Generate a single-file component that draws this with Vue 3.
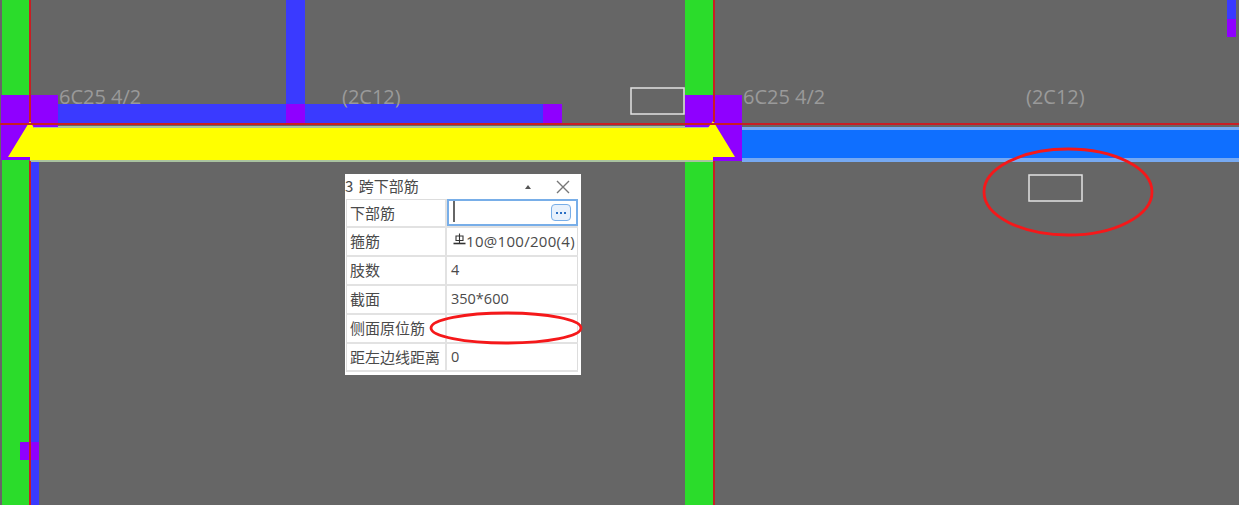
<template>
  <div class="page">
    <svg class="canvas" width="1239" height="505" viewBox="0 0 1239 505">
      <!-- columns -->
      <rect x="2" y="0" width="27" height="505" fill="#2bdc2b" />
      <rect x="685" y="0" width="28" height="505" fill="#2bdc2b" />
      <rect x="30" y="160" width="9" height="345" fill="#3a3aff" />
      <rect x="286" y="0" width="19" height="104" fill="#3a3aff" />
      <rect x="1227" y="0" width="9" height="19" fill="#3a3aff" />
      <rect x="1227" y="19" width="9" height="18" fill="#8f00ff" />
      <rect x="20" y="442" width="19" height="18" fill="#8f00ff" />

      <!-- beams -->
      <rect x="58" y="104" width="485" height="19" fill="#3a3aff" />
      <rect x="286" y="104" width="19" height="19" fill="#8f00ff" />
      <rect x="543" y="104" width="19" height="19" fill="#8f00ff" />
      <rect x="742" y="127" width="497" height="35" fill="#76a9f2" />
      <rect x="742" y="130" width="497" height="28" fill="#0f6fff" />
      <rect x="30" y="126" width="683" height="36" fill="#a9c3a0" />

      <!-- supports -->
      <polygon points="1,95 58,95 58,127 34,127 30,160 1,160" fill="#8f00ff" />
      <polygon points="685,95 742,95 742,161 713,161 713,127 685,127" fill="#8f00ff" />
      <polygon
        points="8,157 30,121 34,128 708,128 713,121 735,157 713,157 713,160 30,160 30,157"
        fill="#ffff00"
      />

      <!-- axis lines -->
      <g class="axes">
        <rect x="0" y="123" width="1239" height="2" />
        <rect x="29" y="0" width="2" height="122" />
        <rect x="29" y="161" width="2" height="344" />
        <rect x="713" y="0" width="2" height="122" />
        <rect x="713" y="161" width="2" height="344" />
      </g>

      <!-- annotations -->
      <text v-for="label in labels" :key="label.x" class="label" :x="label.x" y="104">{{ label.text }}</text>
      <rect x="631" y="88" width="53" height="26" class="input-box" />
      <rect x="1029" y="175" width="53" height="26" class="input-box" />
      <ellipse cx="1068" cy="192" rx="84" ry="43" class="mark" />
    </svg>

    <div class="dialog">
      <div class="dialog-title">
        <span class="dialog-name">3 跨下部筋</span>
        <span class="caret"></span>
        <svg class="close" width="14" height="14" viewBox="0 0 14 14">
          <path d="M1 1 L13 13 M13 1 L1 13" stroke="#777" stroke-width="1.4" fill="none" />
        </svg>
      </div>
      <div class="grid">
        <div v-for="row in rows" :key="row.name" class="row" :style="{ height: row.height + 'px' }">
          <div class="cell name">{{ row.name }}</div>
          <div class="cell value" :class="{ editing: row.editing, wide: row.rebar }">
            <template v-if="row.editing">
              <span class="cursor"></span>
              <span class="more">
                <i></i><i></i><i></i>
              </span>
            </template>
            <template v-else>
              <svg v-if="row.rebar" class="rebar" width="13" height="13" viewBox="0 0 13 13">
                <path d="M6.5 0.5 V10 M3 3 H10 V7.5 H3 Z" stroke="#333" stroke-width="1.1" fill="none" />
                <path d="M0.5 10.5 H12.5" stroke="#333" stroke-width="1.6" fill="none" />
              </svg>
              {{ row.value }}
            </template>
          </div>
        </div>
      </div>
    </div>

    <svg class="overlay" width="170" height="40" viewBox="0 0 170 40">
      <ellipse cx="85" cy="20" rx="75" ry="15" class="mark" />
    </svg>
  </div>
</template>

<script setup>
const labels = [
  { x: 59, text: '6C25 4/2' },
  { x: 342, text: '(2C12)' },
  { x: 743, text: '6C25 4/2' },
  { x: 1026, text: '(2C12)' }
]

const rows = [
  { name: '下部筋', value: '', height: 28, editing: true },
  { name: '箍筋', value: '10@100/200(4)', height: 29, rebar: true },
  { name: '肢数', value: '4', height: 29 },
  { name: '截面', value: '350*600', height: 29 },
  { name: '侧面原位筋', value: '', height: 29 },
  { name: '距左边线距离', value: '0', height: 28 }
]
</script>

<style scoped>
.page {
  position: relative;
  width: 1239px;
  height: 505px;
  overflow: hidden;
  background: #666666;
}

.canvas {
  display: block;
}

.axes rect {
  fill: #c81e24;
}

.label {
  font-family: "Open Sans", "Liberation Sans", sans-serif;
  font-size: 20px;
  fill: #9a9a9a;
}

.input-box {
  fill: none;
  stroke: #e2e2e2;
  stroke-width: 1.5;
}

.mark {
  fill: none;
  stroke: #f5181a;
  stroke-width: 2.8;
}

.dialog {
  position: absolute;
  left: 345px;
  top: 174px;
  width: 236px;
  height: 201px;
  box-sizing: border-box;
  padding-left: 1px;
  background: #fff;
  color: #4a4a4a;
  font-family: "Noto Sans CJK SC", "Noto Sans", sans-serif;
  font-size: 15px;
}

.dialog-title {
  display: flex;
  align-items: center;
  height: 25px;
  margin-left: -1px;
  padding-right: 11px;
}

.dialog-name {
  flex: 1;
  padding-bottom: 2px;
  word-spacing: 2px;
}

.caret {
  width: 0;
  height: 0;
  margin-right: 25px;
  border-left: 3px solid transparent;
  border-right: 3px solid transparent;
  border-bottom: 4px solid #555;
}

.grid {
  width: 231px;
  border-top: 1px solid #ddd;
  border-left: 1px solid #ddd;
}

.row {
  display: grid;
  grid-template-columns: 100px 131px;
  box-sizing: border-box;
  border-bottom: 2px solid #e2e2e2;
}

.cell {
  display: flex;
  align-items: center;
  box-sizing: border-box;
  min-width: 0;
  padding-bottom: 2px;
  white-space: nowrap;
}

.name {
  padding-left: 3px;
  border-right: 2px solid #e2e2e2;
}

.value {
  padding-left: 4px;
  border-right: 1px solid #ddd;
  font-family: "Open Sans", "Noto Sans", sans-serif;
  font-size: 14.5px;
  overflow: hidden;
}

.value.wide {
  font-size: 15px;
  letter-spacing: 0.3px;
}

.value.editing {
  position: relative;
  margin-top: -1px;
  border: 2px solid #78aee8;
}

.cursor {
  width: 2px;
  height: 21px;
  background: #666;
}

.more {
  position: absolute;
  right: 5px;
  top: 3px;
  display: flex;
  align-items: center;
  justify-content: center;
  gap: 2px;
  width: 20px;
  height: 17px;
  box-sizing: border-box;
  border: 1px solid #78aee8;
  border-radius: 4px;
  background: #e8f1fc;
}

.more i {
  width: 2px;
  height: 2px;
  background: #2a6fc4;
}

.rebar {
  flex: none;
  margin-top: -3px;
  margin-left: 2px;
}

.overlay {
  position: absolute;
  left: 421px;
  top: 308px;
}
</style>

<style>
body {
  margin: 0;
}
</style>
